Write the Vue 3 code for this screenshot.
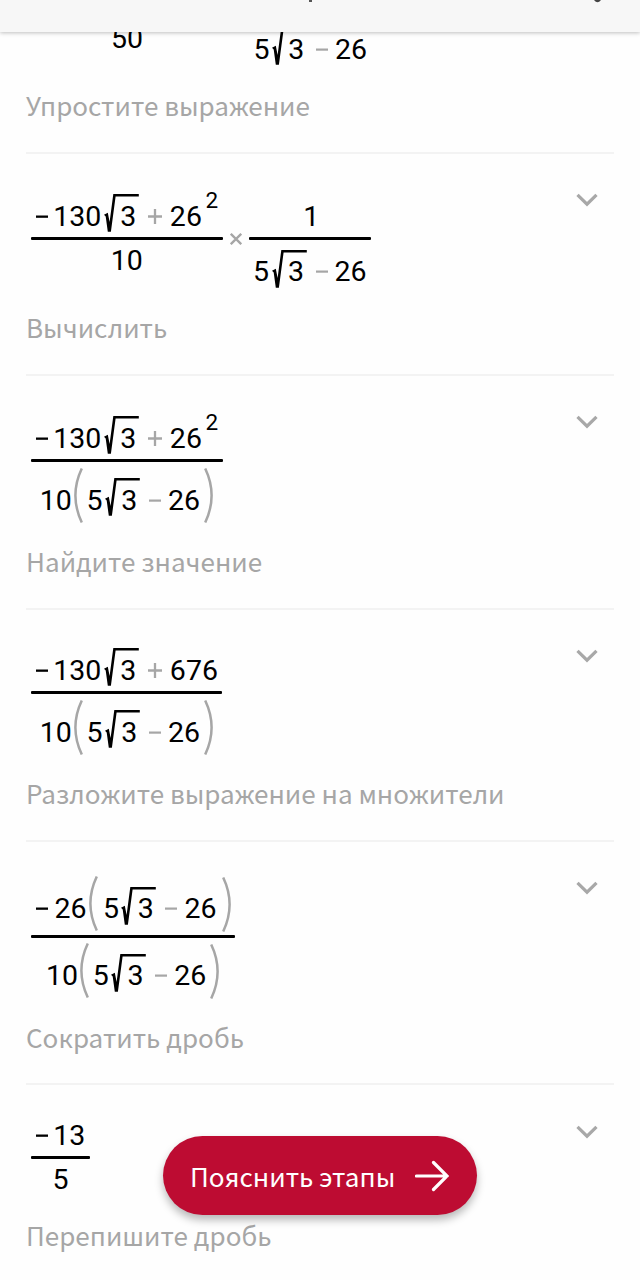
<script setup>
// ── Shared token groups ───────────────────────────────────────
const num = (v) => ({ t: 'num', v })
const NEG    = { t: 'neg' }
const ROOT   = { t: 'root', v: '3' }
const PLUS   = { t: 'plus' }
const MINUS  = { t: 'minus' }
const OPEN   = { t: 'open' }
const CLOSE  = { t: 'close' }

const DIFF = [num('5'), ROOT, MINUS, num('26')]
const SQUARE_SUM = [NEG, num('130'), ROOT, PLUS, num('26'), { t: 'sup', v: '2' }]

const steps = [
  {
    // numerators are scrolled away, only the lower half is left
    label: 'Упростите выражение',
    fracs: [
      { top: [], bottom: [num('50')], width: 192 },
      { top: [], bottom: DIFF }
    ]
  },
  {
    label: 'Вычислить',
    fracs: [
      { top: SQUARE_SUM, bottom: [num('10')] },
      { top: [num('1')], bottom: DIFF }
    ]
  },
  {
    label: 'Найдите значение',
    fracs: [{ top: SQUARE_SUM, bottom: [num('10'), OPEN, ...DIFF, CLOSE] }]
  },
  {
    label: 'Разложите выражение на множители',
    fracs: [{
      top: [NEG, num('130'), ROOT, PLUS, num('676')],
      bottom: [num('10'), OPEN, ...DIFF, CLOSE]
    }]
  },
  {
    label: 'Сократить дробь',
    fracs: [{
      top: [NEG, num('26'), OPEN, ...DIFF, CLOSE],
      bottom: [num('10'), OPEN, ...DIFF, CLOSE]
    }]
  },
  {
    label: 'Перепишите дробь',
    fracs: [{ top: [NEG, num('13')], bottom: [num('5')] }]
  }
]

const isTall = (row) => row.some(tok => tok.t === 'open')
</script>

<template>
  <div class="screen">

    <!-- Header, scrolled almost out of view -->
    <header class="topbar">
      <svg width="640" height="4" viewBox="0 0 640 4" aria-hidden="true">
        <rect x="309" y="0" width="3" height="2" fill="#555"/>
        <path d="M594 0 Q597.500 4.500 601 0 Z" fill="#444"/>
      </svg>
    </header>

    <!-- Solution steps -->
    <main class="steps">
      <section v-for="(step, i) in steps" :key="i" class="step">
        <div class="step-body">
          <div class="formula">
            <template v-for="(frac, f) in step.fracs" :key="f">
              <div v-if="f > 0" class="times">
                <svg width="12" height="12" viewBox="0 0 12 12" aria-hidden="true">
                  <path d="M0.800 0.800 L11.200 11.200 M11.200 0.800 L0.800 11.200" stroke="#a6a6a6" stroke-width="2.300"/>
                </svg>
              </div>
              <div class="frac" :style="frac.width ? { width: frac.width + 'px' } : null">
                <template v-for="side in ['top', 'bottom']" :key="side">
                  <div :class="['row', side, { tall: isTall(frac[side]) }]">
                    <template v-for="(tok, k) in frac[side]" :key="k">
                      <span v-if="tok.t === 'num'" class="num">{{ tok.v }}</span>
                      <span v-else-if="tok.t === 'sup'" class="sup">{{ tok.v }}</span>
                      <span v-else-if="tok.t === 'root'" class="root">
                        <svg class="root-sign" width="35" height="38" viewBox="0 0 35 38" fill="none" aria-hidden="true">
                          <path d="M0 20.800 L3.800 18.800 L5.600 28 L9.300 0 H34.800 V2.400 H11.600 L6.900 37.800 H3.800 L1.700 22.500 Z" fill="#000"/>
                        </svg>
                        <span class="radicand">{{ tok.v }}</span>
                      </span>
                      <svg v-else-if="tok.t === 'neg'" class="neg" width="12" height="34" viewBox="0 0 12 34" aria-hidden="true">
                        <rect x="0" y="15.500" width="12" height="2.300" fill="#000"/>
                      </svg>
                      <svg v-else-if="tok.t === 'minus'" class="minus" width="12" height="34" viewBox="0 0 12 34" aria-hidden="true">
                        <rect x="0" y="15.500" width="12" height="2.200" fill="#a6a6a6"/>
                      </svg>
                      <svg v-else-if="tok.t === 'plus'" class="plus" width="14" height="34" viewBox="0 0 14 34" aria-hidden="true">
                        <path d="M0 16.500 H14 M7 9 V24" stroke="#a6a6a6" stroke-width="2.300"/>
                      </svg>
                      <svg v-else class="paren" width="9" height="55" viewBox="0 0 9 55" fill="none" aria-hidden="true">
                        <path
                          :d="tok.t === 'open' ? 'M7.800 0.500 Q-5 27.500 7.800 54.500' : 'M1.200 0.500 Q14 27.500 1.200 54.500'"
                          stroke="#a6a6a6"
                          stroke-width="2.500"
                        />
                      </svg>
                    </template>
                  </div>
                  <div v-if="side === 'top'" class="bar"></div>
                </template>
              </div>
            </template>
          </div>
          <svg class="chevron" width="22" height="14" viewBox="0 0 22 14" fill="none" aria-hidden="true">
            <path d="M1.500 1.800 L11 11.200 L20.500 1.800" stroke="#a8a8a8" stroke-width="3.200"/>
          </svg>
        </div>
        <p class="label">{{ step.label }}</p>
      </section>
    </main>

    <!-- Floating action -->
    <button class="explain">
      Пояснить этапы
      <svg width="34" height="32" viewBox="0 0 34 32" fill="none" aria-hidden="true">
        <path d="M1.500 16 H32 M18.500 2.500 L32 16 L18.500 29.500" stroke="#fff" stroke-width="3.200" stroke-linecap="round"/>
      </svg>
    </button>

  </div>
</template>

<style>
body {
  background: #fefefe;
}
</style>

<style scoped>
.screen {
  position: relative;
  width: 640px;
  height: 1280px;
  overflow: hidden;
  background: #fefefe;
}

/* Header */
.topbar {
  position: absolute;
  top: 0;
  left: 0;
  z-index: 2;
  width: 640px;
  height: 32px;
  background: #f7f7f7;
  box-shadow: 0 1px 4px rgba(0, 0, 0, 0.25);
}
.topbar svg { display: block; }

/* Steps */
.steps {
  margin-top: -22.3px;
  padding: 0 26px;
}
.step {
  border-bottom: 2px solid #f3f3f3;
}
.step-body {
  display: flex;
  justify-content: space-between;
  align-items: flex-start;
  padding: 33.3px 16.5px 0 5px;
}
.chevron {
  margin-top: 6.5px;
}
.label {
  margin: 0;
  height: 84.6px;
  padding-top: 18px;
  box-sizing: border-box;
  font-family: "Noto Sans CJK SC", "Noto Sans", sans-serif;
  font-size: 26.05px;
  line-height: 40px;
  color: #a6a6a6;
  white-space: nowrap;
}

/* Formula: every fraction is a column, bars share the middle row */
.formula {
  display: grid;
  grid-template-rows: auto 2.6px auto;
  grid-auto-flow: column;
  row-gap: 4.2px;
  font-family: Roboto, sans-serif;
  font-size: 28.5px;
  line-height: 34px;
  color: #000;
}
.frac {
  display: grid;
  grid-row: 1 / 4;
  grid-template-rows: subgrid;
}
.row {
  display: flex;
  justify-content: center;
  align-items: flex-end;
  padding: 0 4.5px;
}
.row.top {
  align-self: end;
  margin-bottom: -0.8px;
}
.row.bottom { align-self: start; }
.row.tall { padding-top: 1.5px; }
.row.tall > * { margin-bottom: 5.4px; }
.row.tall > .paren { margin-bottom: 0.4px; }
.bar {
  background: #000;
  border-radius: 1px;
}
.times {
  grid-row: 2;
  display: flex;
  align-items: center;
  justify-content: center;
  width: 26px;
  height: 2.6px;
}
.times svg { flex-shrink: 0; }

/* Tokens */
.num { height: 34px; }
.top > .num:only-child { padding-left: 3px; }
.neg { margin: 0 5.3px 0 0.5px; }
.top.tall > .neg { margin-right: 6.5px; }
.minus { margin: 0 7px 0 9px; }
.plus { margin: 0 7.5px 0 9.5px; }
.sup {
  height: 47px;
  margin-left: 3.5px;
  font-size: 22.5px;
  line-height: 26px;
}
.root {
  display: grid;
  width: 35px;
  height: 45px;
  margin-left: 2.5px;
  align-items: end;
}
.root > * { grid-area: 1 / 1; }
.root-sign {
  display: block;
  margin-bottom: 1.5px;
}
.radicand {
  height: 34px;
  padding-left: 16.3px;
}
.paren {
  margin: 0 3.3px 0 2.4px;
}
.top .paren { margin-right: 5px; }
.num + .paren:last-child { margin: 0 1px 0 3.8px; }
.top .num + .paren:last-child { margin: 0 0 0 5px; }

/* Button */
.explain {
  position: absolute;
  left: 163px;
  top: 1136px;
  display: flex;
  align-items: center;
  justify-content: space-between;
  width: 314px;
  height: 79px;
  padding: 0 28px 0 27px;
  border: none;
  border-radius: 40px;
  background: #bd0c32;
  box-shadow: 0 5px 9px rgba(0, 0, 0, 0.28);
  font-family: "Noto Sans CJK SC", "Noto Sans", sans-serif;
  font-size: 26.1px;
  color: #fff;
  white-space: nowrap;
  cursor: pointer;
}
.explain svg { flex-shrink: 0; }
</style>
